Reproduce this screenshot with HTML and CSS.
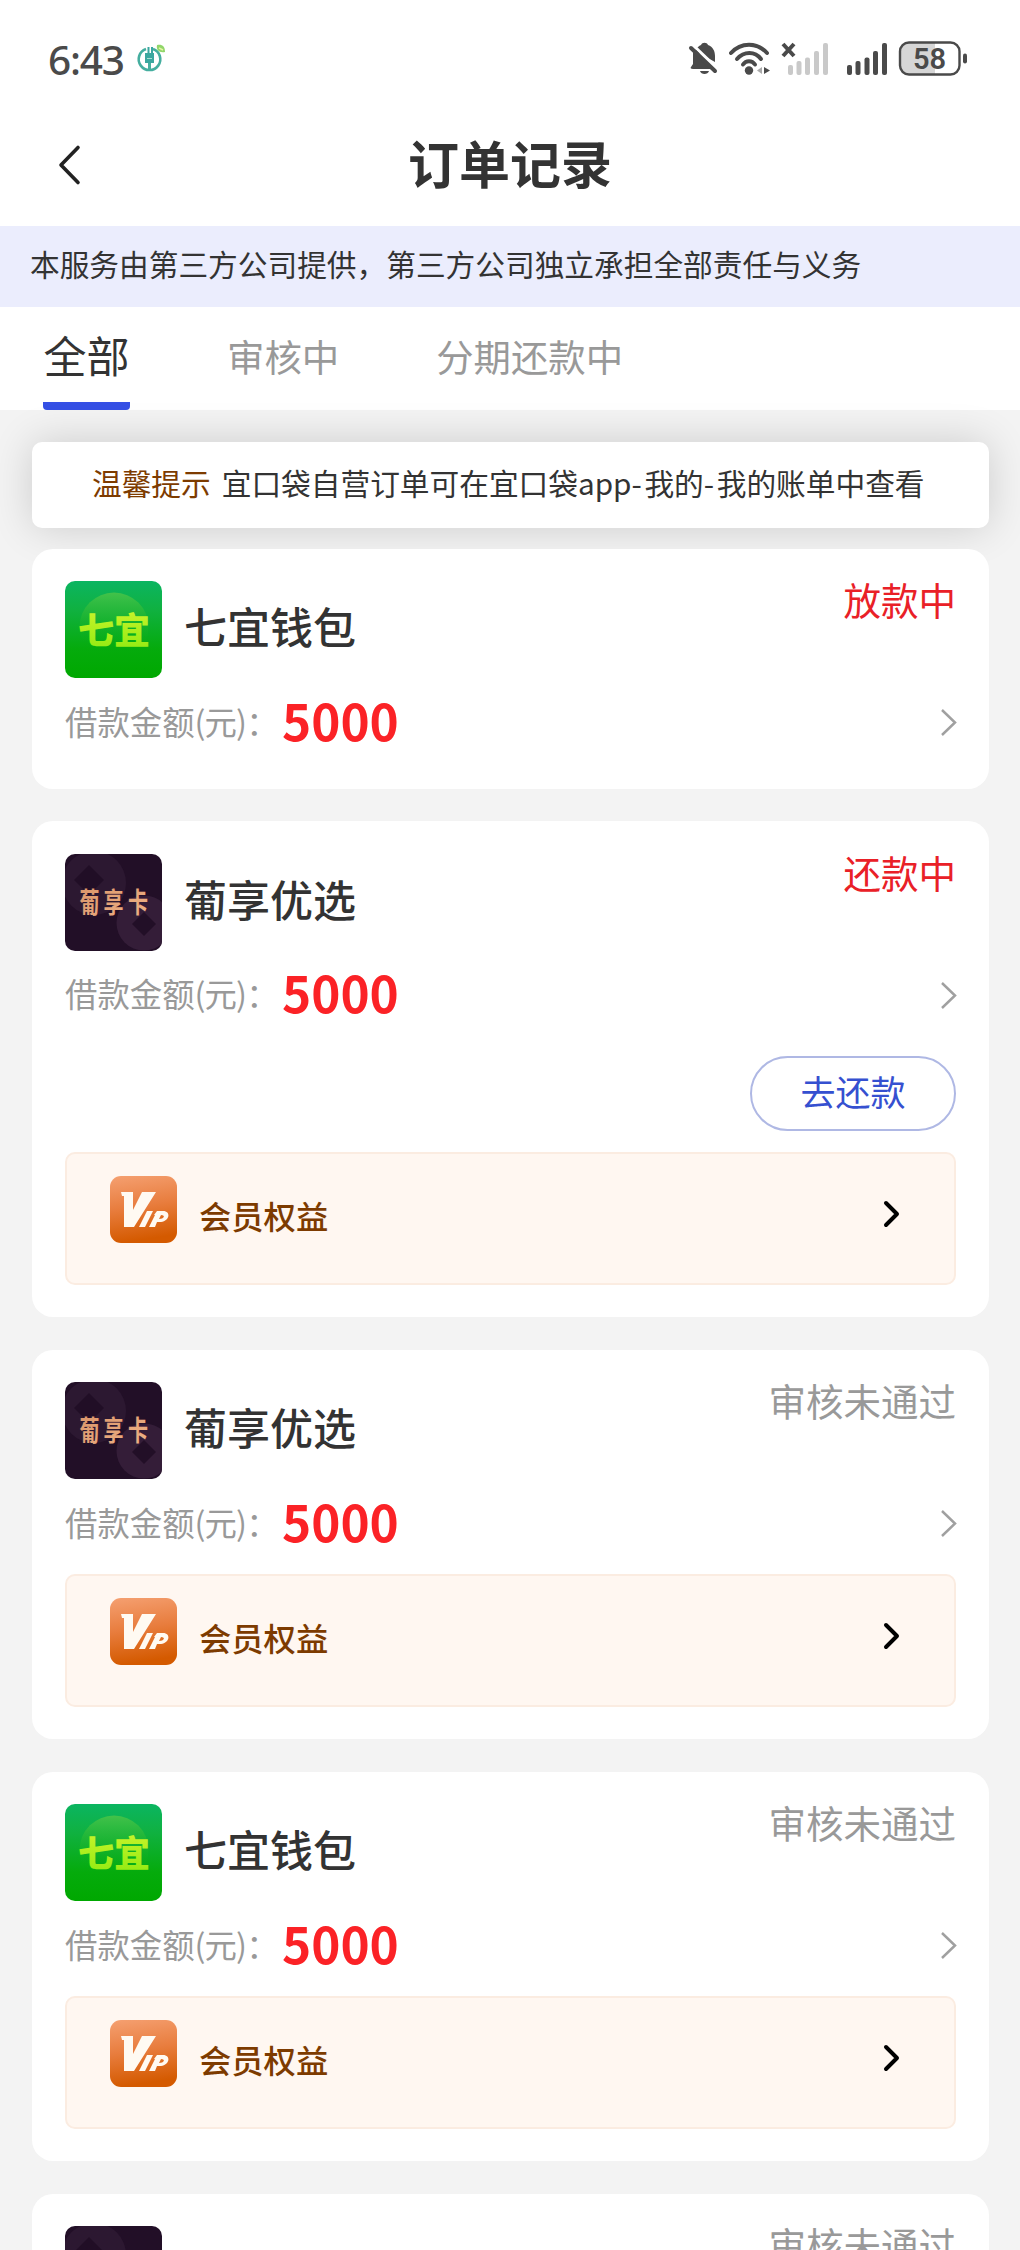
FILE: index.html
```
<!DOCTYPE html>
<html lang="zh-CN">
<head>
<meta charset="utf-8">
<title>订单记录</title>
<link rel="stylesheet" href="styles.css">
</head>
<body>
<svg class="defs" width="0" height="0" aria-hidden="true">
  <defs>
    <linearGradient id="green" x1="0" y1="0" x2="0" y2="1"><stop offset="0" stop-color="#0bb561"/><stop offset=".3" stop-color="#10b140"/><stop offset=".7" stop-color="#05ab0c"/><stop offset="1" stop-color="#00a800"/></linearGradient>
    <linearGradient id="glow" x1="0" y1="0" x2="0" y2="1"><stop offset="0" stop-color="#43c24a"/><stop offset=".75" stop-color="#0dae16" stop-opacity="0"/></linearGradient>
    <linearGradient id="lime" x1="0" y1="0" x2="0" y2="1"><stop offset="0" stop-color="#d2f52e"/><stop offset="1" stop-color="#8dea10"/></linearGradient>
    <linearGradient id="gold" x1="0" y1="0" x2="1" y2="1"><stop offset="0" stop-color="#d99468"/><stop offset="1" stop-color="#f0b489"/></linearGradient>
    <linearGradient id="orange" x1="0" y1="0" x2="0.15" y2="1"><stop offset="0" stop-color="#f5a071"/><stop offset=".5" stop-color="#e87d3e"/><stop offset="1" stop-color="#d45a00"/></linearGradient>
  </defs>
  <symbol id="logo-qiyi" viewBox="0 0 97 97">
    <rect width="97" height="97" fill="url(#green)"/>
    <circle cx="49" cy="46" r="34.500" fill="url(#glow)"/>
    <text class="qiyi-text" x="49" y="63" text-anchor="middle" fill="url(#lime)">七宜</text>
  </symbol>
  <symbol id="logo-puxiang" viewBox="0 0 97 97">
    <rect width="97" height="97" fill="#220f27"/>
    <circle cx="29" cy="29" r="32" fill="#2c1831"/>
    <path d="M24 11 39 26 24 41 9 26Z" fill="#210e26"/>
    <circle cx="79" cy="69" r="27.500" fill="#341d38"/>
    <path d="M79 58 91 70 79 82 67 70Z" fill="#220f27"/>
    <text class="puxiang-text" transform="scale(1 1.4)" x="14.500 38.500 63" y="42.500" fill="url(#gold)">葡享卡</text>
  </symbol>
  <symbol id="vip" viewBox="0 0 67 67">
    <rect width="67" height="67" rx="11" fill="url(#orange)"/>
    <path d="M11 16H23V34L32 16H46L24 51H14V20H12Z" fill="#fffaf2"/>
    <path d="M37 35H43L35 51H29ZM47 35H53C61 35 60 45 51 46L47 46 45 51H39L45 39H44ZM51 39 49 43C54 43 56 39 51 39Z" fill="#fffaf2"/>
  </symbol>
  <symbol id="chev" viewBox="0 0 18 30"><path d="M2 2 15 14.500 2 27" fill="none" stroke="#a0a0a0" stroke-width="2.500"/></symbol>
  <symbol id="chev-bold" viewBox="0 0 18 28"><path d="M3 3 14 14 3 25" fill="none" stroke="#000" stroke-width="4" stroke-linecap="round" stroke-linejoin="round"/></symbol>
</svg>

<header class="status-bar">
  <span class="clock">6:43</span>
  <svg class="app-mark" width="30" height="30" viewBox="0 0 30 30">
    <g fill="none" stroke="#45ae9f"><path d="M10 5A10.800 10.800 0 1 0 17 5" stroke-width="2.600"/><path d="M13.500 18V26" stroke-width="3"/></g>
    <path d="M9 9H11.500V3H13.500V9H15V3H17V9H18V19H9Z" fill="#3ba79f"/>
    <path d="M11 14.500H16" stroke="#a9dfd2"/>
    <path d="M21 1C26 0 29 2 29 8 23 9 20 6 21 1Z" fill="#91d66a"/><path d="M23 4 27 6" stroke="#e5f5a4" stroke-width="1.500"/>
  </svg>
  <div class="indicators">
    <svg width="286" height="44" viewBox="0 0 286 44" fill="#4a4a4a">
      <path d="M9 12C11 8 14 6.500 15 6 16 3 21 3 22 6 27 8 29 12 29 17V23ZM7 13 27 30H7C5 30 4 29 5 28L7 25ZM14 32H23C22 36 15 36 14 32Z"/>
      <path d="M8 7 32 30" fill="none" stroke="#fff" stroke-width="3"/>
      <path d="M5 9 29 32" fill="none" stroke="#4a4a4a" stroke-width="4" stroke-linecap="round"/>
      <g fill="none" stroke="#4a4a4a" stroke-width="4" stroke-linecap="round"><path d="M45 14C55 3 71 3 81 14"/><path d="M51 20C58 12 69 12 75 20"/><path d="M57 25.500C60 21 66 21 69 25.500"/></g>
      <circle cx="63" cy="31.500" r="4.200"/>
      <path d="M76 28V35L71 31.500Z" fill="#aaa"/><path d="M78 28V35L84 31.500Z"/>
      <path d="M97 5 108 17M108 5 97 17" stroke="#4a4a4a" stroke-width="4"/>
      <g fill="#c9c9c9"><rect x="102" y="26" width="5" height="10" rx="2"/><rect x="110.500" y="22" width="5" height="14" rx="2"/><rect x="119" y="18.500" width="5" height="17.500" rx="2"/><rect x="128" y="12" width="5" height="24" rx="2"/><rect x="137" y="4" width="5" height="32" rx="2"/></g>
      <rect x="161" y="26" width="5" height="10" rx="2"/><rect x="169.500" y="22" width="5" height="14" rx="2"/><rect x="178.500" y="18.500" width="5" height="17.500" rx="2"/><rect x="187" y="12" width="5" height="24" rx="2"/><rect x="196" y="4" width="5" height="32" rx="2"/>
      <path d="M222 4H249V36H222Q214 36 214 27V13Q214 4 222 4Z" fill="#d6d6d6"/>
      <rect x="214" y="3.500" width="59.500" height="32" rx="9" fill="none" stroke="#4a4a4a" stroke-width="2.400"/>
      <rect x="277" y="14.500" width="4" height="10" rx="2"/>
      <text class="battery" x="243.500" y="30" text-anchor="middle">58</text>
    </svg>
  </div>
</header>

<nav class="title-bar">
  <svg class="back" width="28" height="44" viewBox="0 0 28 44"><path d="M21 4.500 4 22 21 39.500" fill="none" stroke="#222" stroke-width="3.600" stroke-linecap="round" stroke-linejoin="round"/></svg>
  <h1>订单记录</h1>
</nav>
<p class="notice">本服务由第三方公司提供，第三方公司独立承担全部责任与义务</p>
<div class="tabs">
  <span class="tab active">全部</span><span class="tab">审核中</span><span class="tab">分期还款中</span>
</div>

<main class="list">
  <p class="tip"><b>温馨提示</b><span>宜口袋自营订单可在宜口袋app<i>-</i>我的<i>-</i>我的账单中查看</span></p>

  <section class="card plain">
    <div class="head"><svg class="logo"><use href="#logo-qiyi"/></svg><h2>七宜钱包</h2><span class="state red">放款中</span></div>
    <div class="amount"><span>借款金额<i>(元)</i>：</span><strong>5000</strong><svg class="chev"><use href="#chev"/></svg></div>
  </section>

  <section class="card">
    <div class="head"><svg class="logo"><use href="#logo-puxiang"/></svg><h2>葡享优选</h2><span class="state red">还款中</span></div>
    <div class="amount"><span>借款金额<i>(元)</i>：</span><strong>5000</strong><svg class="chev"><use href="#chev"/></svg></div>
    <div class="actions"><button class="repay">去还款</button></div>
    <div class="vip"><svg class="vip-icon"><use href="#vip"/></svg><span>会员权益</span><svg class="vip-chev"><use href="#chev-bold"/></svg></div>
  </section>

  <section class="card">
    <div class="head"><svg class="logo"><use href="#logo-puxiang"/></svg><h2>葡享优选</h2><span class="state">审核未通过</span></div>
    <div class="amount"><span>借款金额<i>(元)</i>：</span><strong>5000</strong><svg class="chev"><use href="#chev"/></svg></div>
    <div class="vip"><svg class="vip-icon"><use href="#vip"/></svg><span>会员权益</span><svg class="vip-chev"><use href="#chev-bold"/></svg></div>
  </section>

  <section class="card">
    <div class="head"><svg class="logo"><use href="#logo-qiyi"/></svg><h2>七宜钱包</h2><span class="state">审核未通过</span></div>
    <div class="amount"><span>借款金额<i>(元)</i>：</span><strong>5000</strong><svg class="chev"><use href="#chev"/></svg></div>
    <div class="vip"><svg class="vip-icon"><use href="#vip"/></svg><span>会员权益</span><svg class="vip-chev"><use href="#chev-bold"/></svg></div>
  </section>

  <section class="card">
    <div class="head"><svg class="logo"><use href="#logo-puxiang"/></svg><span class="state">审核未通过</span></div>
  </section>
</main>
</body>
</html>
```
FILE: styles.css
```
* { box-sizing: border-box; margin: 0; padding: 0; }
html, body { height: 2250px; overflow: hidden; }
body {
  background: #f3f3f3;
  color: #333;
  font-family: "Noto Sans CJK SC", sans-serif;
  display: flex;
  flex-direction: column;
}
i { font-style: normal; }
.defs { position: absolute; }

.status-bar { height: 104px; flex: none; background: #fff; display: flex; align-items: flex-start; padding: 38px 48px 0 48px; }
.clock { width: 88px; font: 500 40.5px/43px "Noto Sans", sans-serif; letter-spacing: -1.2px; color: #4a4a4a; }
.app-mark { margin-top: 6px; }
.indicators { margin-left: auto; margin-top: 1px; }
.battery { font: 600 29px Roboto, sans-serif; }

.title-bar { height: 122px; flex: none; background: #fff; display: grid; grid-template-columns: 80px 1fr 80px; align-items: center; }
.back { margin-left: 57px; }
h1 { font-size: 51px; line-height: 60px; font-weight: 700; text-align: center; padding-bottom: 7px; }

.notice { height: 81px; flex: none; background: #ebedfd; padding-left: 30px; font-size: 29.7px; line-height: 76px; white-space: nowrap; }

.tabs { height: 103px; flex: none; background: #fff; display: flex; gap: 97px; padding-left: 43px; }
.tab { font-size: 37.4px; line-height: 98px; color: #999; }
.tab.active { width: 87px; text-align: center; font-size: 43px; line-height: 94px; color: #333; border-bottom: 8px solid #3550e5; border-radius: 4px; }

.list { display: flex; flex-direction: column; gap: 32.6px; padding: 32px 31px 0 32px; }
.tip {
  height: 86px; margin-bottom: -12.1px; background: #fff; border-radius: 10px;
  box-shadow: 0 0 42px rgba(0, 0, 0, .16);
  display: flex; gap: 11px; padding-left: 60px;
  font-size: 29.7px; line-height: 82px; white-space: nowrap;
}
.tip b { font-weight: 400; color: #7d3b00; }
.tip i { letter-spacing: 2.6px; }

.card { height: 389.4px; background: #fff; border-radius: 21px; padding: 32.6px 33px; display: flex; flex-direction: column; }
.card.plain { height: 240px; }
.card:has(.actions) { height: 496px; }
.head { display: flex; height: 97px; flex: none; }
.logo { width: 97px; height: 97px; border-radius: 10px; }
.qiyi-text { font: 900 36px "Noto Sans CJK SC", sans-serif; }
.puxiang-text { font: 700 20px "Noto Sans CJK SC", sans-serif; }
h2 { margin-left: 22px; font-size: 43px; line-height: 89px; font-weight: 500; }
.state { margin-left: auto; font-size: 37.5px; line-height: 36px; color: #999; }
.state.red { color: #e92027; }

.amount { display: flex; align-items: center; height: 44px; margin-top: 22px; flex: none; }
.amount span { width: 217px; font-size: 32.4px; color: #999; line-height: 44px; white-space: nowrap; padding-bottom: 3px; }
.amount i { letter-spacing: -.9px; }
.amount strong { font: 700 49.5px/44px "Noto Sans CJK SC", sans-serif; color: #fb2226; padding-bottom: 5px; }
.chev { width: 18px; height: 30px; margin: 2px -2px 0 auto; }

.actions { display: flex; justify-content: flex-end; margin-top: 39px; margin-bottom: -7.5px; }
.repay { width: 206px; height: 75px; border: 2px solid #afb8e4; border-radius: 38px; background: #fff; color: #3550d0; font: 400 35px/66px "Noto Sans CJK SC", sans-serif; padding-bottom: 5px; }
.vip { height: 133px; margin-top: 29px; flex: none; display: flex; align-items: flex-start; background: #fff7f1; border: 2px solid #fbece1; border-radius: 10px; padding: 22px 53px 0 43px; }
.vip-icon { width: 67px; height: 67px; }
.vip span { margin-left: 22px; font-size: 32.3px; line-height: 79px; font-weight: 500; color: #7d3b00; }
.vip-chev { width: 18px; height: 28px; margin: 24px 0 0 auto; }
```
